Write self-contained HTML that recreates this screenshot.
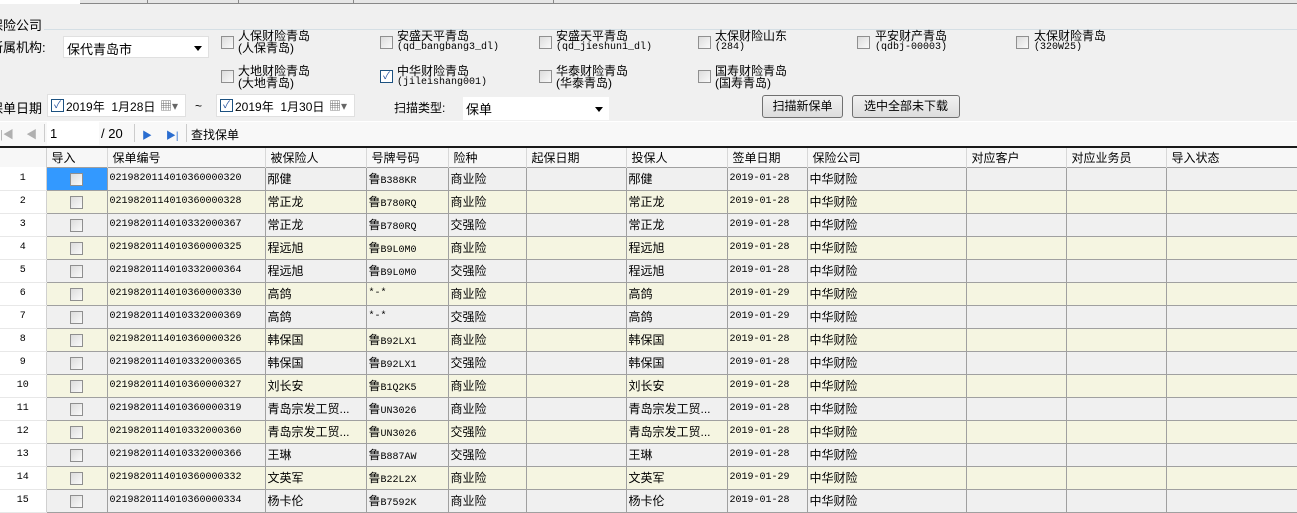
<!DOCTYPE html>
<html><head><meta charset="utf-8">
<style>
*{margin:0;padding:0;box-sizing:border-box}
body{width:1297px;height:499px;overflow:hidden;background:#f0f0f0;position:relative;font-family:"Liberation Sans","Noto Sans CJK SC",sans-serif;font-size:12px;color:#000}
.a{position:absolute;white-space:nowrap}
.cb{position:absolute;width:13px;height:13px;border:1px solid #8f8f8f;background:linear-gradient(135deg,#dcdcdc,#fafafa)}
.cbk{background:#fff;border-color:#1c5180}
.lbl{position:absolute;line-height:12px;font-size:12px}
.lbl small{font-family:"Liberation Mono",monospace;font-size:10px;display:block;letter-spacing:0}
.btn{position:absolute;height:23px;border:1px solid #707070;border-radius:3px;background:linear-gradient(#f2f2f2,#dddddd);text-align:center;line-height:21px}
.mono{font-family:"Liberation Mono",monospace;font-size:10px}
table{position:absolute;left:0;top:148px;border-collapse:collapse;table-layout:fixed;width:1297px}
td{height:23px;border:1px solid #a0a0a0;padding:0 2px;white-space:nowrap;overflow:hidden;font-size:12px}
tr.h td{height:19px;border:none;border-right:1px solid #d8d8d8;background:#f7f7f7;padding-left:5px}
td.n{background:#fff;border:none;border-right:1px solid #d0d0d0;border-bottom:1px solid #e8e8e8;text-align:center;font-family:"Liberation Mono",monospace;font-size:10px}
tr.o td{background:#f5f5e1}
tr.o td.n,tr.e td.n{background:#fff}
td.c{text-align:center}
td.c span{display:inline-block;width:13px;height:13px;border:1px solid #8f8f8f;background:linear-gradient(135deg,#dcdcdc,#fafafa);vertical-align:middle}
</style></head><body>
<div class="a" style="left:0;top:0;width:1297px;height:4px;background:#fff"></div>
<div class="a" style="left:80px;top:0;width:1217px;height:4px;background:#e6e6e6;border-bottom:1px solid #888"></div>
<div class="a" style="left:147px;top:0;width:1px;height:4px;background:#888"></div>
<div class="a" style="left:238px;top:0;width:1px;height:4px;background:#888"></div>
<div class="a" style="left:353px;top:0;width:1px;height:4px;background:#888"></div>
<div class="a" style="left:553px;top:0;width:1px;height:4px;background:#888"></div>

<div class="a" style="left:-10px;top:15px;font-size:13px">保险公司</div>
<div class="a" style="left:44px;top:29px;width:1253px;height:1px;background:#d5dfe5"></div>
<div class="a" style="left:-10px;top:37px;font-size:13px">所属机构:</div>
<div class="a" style="left:63px;top:36px;width:146px;height:22px;background:#fff;border:1px solid #e0e0e0;padding:2px 0 0 3px;font-size:13px">保代青岛市<span style="position:absolute;right:6px;top:9px;border:4px solid transparent;border-top:5px solid #000;border-bottom:0"></span></div>

<div class="cb" style="left:221px;top:36px"></div><div class="lbl" style="left:238px;top:30px">人保财险青岛<br>(人保青岛)</div>
<div class="cb" style="left:380px;top:36px"></div><div class="lbl" style="left:397px;top:30px">安盛天平青岛<small>(qd_bangbang3_dl)</small></div>
<div class="cb" style="left:539px;top:36px"></div><div class="lbl" style="left:556px;top:30px">安盛天平青岛<small>(qd_jieshun1_dl)</small></div>
<div class="cb" style="left:698px;top:36px"></div><div class="lbl" style="left:715px;top:30px">太保财险山东<small>(284)</small></div>
<div class="cb" style="left:857px;top:36px"></div><div class="lbl" style="left:875px;top:30px">平安财产青岛<small>(qdbj-00003)</small></div>
<div class="cb" style="left:1016px;top:36px"></div><div class="lbl" style="left:1034px;top:30px">太保财险青岛<small>(320W25)</small></div>

<div class="cb" style="left:221px;top:70px"></div><div class="lbl" style="left:238px;top:65px">大地财险青岛<br>(大地青岛)</div>
<div class="cb cbk" style="left:380px;top:70px;font-size:10px;line-height:11px;color:#1c4c9c;text-align:center">✓</div><div class="lbl" style="left:397px;top:65px">中华财险青岛<small>(jileishang001)</small></div>
<div class="cb" style="left:539px;top:70px"></div><div class="lbl" style="left:556px;top:65px">华泰财险青岛<br>(华泰青岛)</div>
<div class="cb" style="left:698px;top:70px"></div><div class="lbl" style="left:715px;top:65px">国寿财险青岛<br>(国寿青岛)</div>

<div class="a" style="left:-10px;top:98px;font-size:13px">保单日期</div>
<div class="a" style="left:47px;top:94px;width:139px;height:23px;background:#fff;border:1px solid #e0e0e0"><span class="cb cbk" style="left:3px;top:4px;font-size:10px;line-height:11px;color:#1c4c9c;text-align:center">✓</span><span class="a" style="left:18px;top:3px">2019年&nbsp;&nbsp;1月28日</span><span class="a" style="left:112px;top:2px;color:#666">▦▾</span></div>
<div class="a" style="left:195px;top:99px">~</div>
<div class="a" style="left:216px;top:94px;width:139px;height:23px;background:#fff;border:1px solid #e0e0e0"><span class="cb cbk" style="left:3px;top:4px;font-size:10px;line-height:11px;color:#1c4c9c;text-align:center">✓</span><span class="a" style="left:18px;top:3px">2019年&nbsp;&nbsp;1月30日</span><span class="a" style="left:112px;top:2px;color:#666">▦▾</span></div>
<div class="a" style="left:394px;top:99px">扫描类型:</div>
<div class="a" style="left:463px;top:97px;width:146px;height:23px;background:#fff;padding:2px 0 0 3px;font-size:13px">保单<span style="position:absolute;right:6px;top:10px;border:4px solid transparent;border-top:5px solid #000;border-bottom:0"></span></div>
<div class="btn" style="left:762px;top:95px;width:81px">扫描新保单</div>
<div class="btn" style="left:852px;top:95px;width:108px">选中全部未下载</div>

<div class="a" style="left:0;top:121px;width:1297px;height:25px;background:#f8f8f8;border-top:1px solid #fff"></div>
<div class="a" style="left:0;top:126px;color:#b0b0b0;font-size:11px">|◀&nbsp;&nbsp;&nbsp;&nbsp;◀</div>
<div class="a" style="left:44px;top:124px;width:1px;height:18px;background:#ccc"></div>
<div class="a" style="left:47px;top:122px;width:52px;height:23px;background:#fff"></div>
<div class="a" style="left:50px;top:126px;font-size:13px">1</div>
<div class="a" style="left:101px;top:126px;font-size:13px">/ 20</div>
<div class="a" style="left:134px;top:124px;width:1px;height:18px;background:#ccc"></div>
<div class="a" style="left:142px;top:127px;color:#2a6dd0;font-size:10px">▶&nbsp;&nbsp;&nbsp;&nbsp;&nbsp;▶|</div>
<div class="a" style="left:186px;top:124px;width:1px;height:18px;background:#ccc"></div>
<div class="a" style="left:191px;top:126px">查找保单</div>
<div class="a" style="left:0;top:146px;width:1297px;height:2px;background:#1a1a1a"></div>

<table>
<colgroup><col style="width:46px"><col style="width:61px"><col style="width:158px"><col style="width:101px"><col style="width:82px"><col style="width:78px"><col style="width:100px"><col style="width:101px"><col style="width:80px"><col style="width:159px"><col style="width:100px"><col style="width:100px"><col style="width:131px"></colgroup>
<tr class="h"><td style="border-right:1px solid #d0d0d0"></td><td>导入</td><td>保单编号</td><td>被保险人</td><td>号牌号码</td><td>险种</td><td>起保日期</td><td>投保人</td><td>签单日期</td><td>保险公司</td><td>对应客户</td><td>对应业务员</td><td>导入状态</td></tr>
<tr class="e"><td class="n">1</td><td class="c" style="background:#3399ff"><span></span></td><td class="mono">0219820114010360000320</td><td>邴健</td><td>鲁<span class="mono">B388KR</span></td><td>商业险</td><td></td><td>邴健</td><td class="mono">2019-01-28</td><td>中华财险</td><td></td><td></td><td></td></tr>
<tr class="o"><td class="n">2</td><td class="c"><span></span></td><td class="mono">0219820114010360000328</td><td>常正龙</td><td>鲁<span class="mono">B780RQ</span></td><td>商业险</td><td></td><td>常正龙</td><td class="mono">2019-01-28</td><td>中华财险</td><td></td><td></td><td></td></tr>
<tr class="e"><td class="n">3</td><td class="c"><span></span></td><td class="mono">0219820114010332000367</td><td>常正龙</td><td>鲁<span class="mono">B780RQ</span></td><td>交强险</td><td></td><td>常正龙</td><td class="mono">2019-01-28</td><td>中华财险</td><td></td><td></td><td></td></tr>
<tr class="o"><td class="n">4</td><td class="c"><span></span></td><td class="mono">0219820114010360000325</td><td>程远旭</td><td>鲁<span class="mono">B9L0M0</span></td><td>商业险</td><td></td><td>程远旭</td><td class="mono">2019-01-28</td><td>中华财险</td><td></td><td></td><td></td></tr>
<tr class="e"><td class="n">5</td><td class="c"><span></span></td><td class="mono">0219820114010332000364</td><td>程远旭</td><td>鲁<span class="mono">B9L0M0</span></td><td>交强险</td><td></td><td>程远旭</td><td class="mono">2019-01-28</td><td>中华财险</td><td></td><td></td><td></td></tr>
<tr class="o"><td class="n">6</td><td class="c"><span></span></td><td class="mono">0219820114010360000330</td><td>高鸽</td><td class="mono">*-*</td><td>商业险</td><td></td><td>高鸽</td><td class="mono">2019-01-29</td><td>中华财险</td><td></td><td></td><td></td></tr>
<tr class="e"><td class="n">7</td><td class="c"><span></span></td><td class="mono">0219820114010332000369</td><td>高鸽</td><td class="mono">*-*</td><td>交强险</td><td></td><td>高鸽</td><td class="mono">2019-01-29</td><td>中华财险</td><td></td><td></td><td></td></tr>
<tr class="o"><td class="n">8</td><td class="c"><span></span></td><td class="mono">0219820114010360000326</td><td>韩保国</td><td>鲁<span class="mono">B92LX1</span></td><td>商业险</td><td></td><td>韩保国</td><td class="mono">2019-01-28</td><td>中华财险</td><td></td><td></td><td></td></tr>
<tr class="e"><td class="n">9</td><td class="c"><span></span></td><td class="mono">0219820114010332000365</td><td>韩保国</td><td>鲁<span class="mono">B92LX1</span></td><td>交强险</td><td></td><td>韩保国</td><td class="mono">2019-01-28</td><td>中华财险</td><td></td><td></td><td></td></tr>
<tr class="o"><td class="n">10</td><td class="c"><span></span></td><td class="mono">0219820114010360000327</td><td>刘长安</td><td>鲁<span class="mono">B1Q2K5</span></td><td>商业险</td><td></td><td>刘长安</td><td class="mono">2019-01-28</td><td>中华财险</td><td></td><td></td><td></td></tr>
<tr class="e"><td class="n">11</td><td class="c"><span></span></td><td class="mono">0219820114010360000319</td><td>青岛宗发工贸...</td><td>鲁<span class="mono">UN3026</span></td><td>商业险</td><td></td><td>青岛宗发工贸...</td><td class="mono">2019-01-28</td><td>中华财险</td><td></td><td></td><td></td></tr>
<tr class="o"><td class="n">12</td><td class="c"><span></span></td><td class="mono">0219820114010332000360</td><td>青岛宗发工贸...</td><td>鲁<span class="mono">UN3026</span></td><td>交强险</td><td></td><td>青岛宗发工贸...</td><td class="mono">2019-01-28</td><td>中华财险</td><td></td><td></td><td></td></tr>
<tr class="e"><td class="n">13</td><td class="c"><span></span></td><td class="mono">0219820114010332000366</td><td>王琳</td><td>鲁<span class="mono">B887AW</span></td><td>交强险</td><td></td><td>王琳</td><td class="mono">2019-01-28</td><td>中华财险</td><td></td><td></td><td></td></tr>
<tr class="o"><td class="n">14</td><td class="c"><span></span></td><td class="mono">0219820114010360000332</td><td>文英军</td><td>鲁<span class="mono">B22L2X</span></td><td>商业险</td><td></td><td>文英军</td><td class="mono">2019-01-29</td><td>中华财险</td><td></td><td></td><td></td></tr>
<tr class="e"><td class="n">15</td><td class="c"><span></span></td><td class="mono">0219820114010360000334</td><td>杨卡伦</td><td>鲁<span class="mono">B7592K</span></td><td>商业险</td><td></td><td>杨卡伦</td><td class="mono">2019-01-28</td><td>中华财险</td><td></td><td></td><td></td></tr>
</table>
</body></html>
